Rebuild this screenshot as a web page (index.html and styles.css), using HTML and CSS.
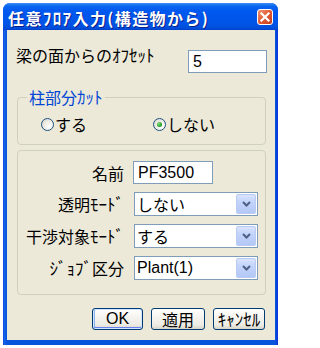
FILE: index.html
```html
<!DOCTYPE html>
<html lang="ja">
<head>
<meta charset="utf-8">
<title>任意ﾌﾛｱ入力(構造物から)</title>
<link rel="stylesheet" href="styles.css">
</head>
<body>
<div class="window">
  <div class="titlebar">
    <span class="title">任意<span class="hw">ﾌﾛｱ</span>入力(構造物から)</span>
    <span class="close">
      <svg width="16" height="16" viewBox="0 0 16 16">
        <defs>
          <linearGradient id="cg" x1="0" y1="0" x2="1" y2="1">
            <stop offset="0" stop-color="#F09A78"/>
            <stop offset="0.5" stop-color="#E25A35"/>
            <stop offset="1" stop-color="#C23A18"/>
          </linearGradient>
        </defs>
        <rect x="0.5" y="0.5" width="15" height="15" rx="2.5" fill="url(#cg)" stroke="#FFFFFF" stroke-width="1"/>
        <path d="M4.5 4.5 L11.5 11.5 M11.5 4.5 L4.5 11.5" stroke="#FFFFFF" stroke-width="2.2" stroke-linecap="square"/>
      </svg>
    </span>
  </div>
  <div class="client">
    <div class="offset-row">
      <span class="offset-label">梁の面からの<span class="hw">ｵﾌｾｯﾄ</span></span>
      <div class="textbox offset-box latin">5</div>
    </div>

    <fieldset class="group cut-group">
      <legend class="group-title">柱部分<span class="hw">ｶｯﾄ</span></legend>
      <div class="radios">
        <div class="radio"><span class="radio-mark"></span><span>する</span></div>
        <div class="radio"><span class="radio-mark checked"></span><span>しない</span></div>
      </div>
    </fieldset>

    <div class="group props">
      <span class="prop-label">名前</span>
      <div class="textbox name-box latin">PF3500</div>

      <span class="prop-label">透明<span class="hw">ﾓｰﾄﾞ</span></span>
      <div class="combo"><span class="combo-text">しない</span><span class="combo-btn"><svg width="9" height="6" viewBox="0 0 9 6"><path d="M1 1 L4.5 4.5 L8 1" fill="none" stroke="#4D6185" stroke-width="2"/></svg></span></div>

      <span class="prop-label">干渉対象<span class="hw">ﾓｰﾄﾞ</span></span>
      <div class="combo"><span class="combo-text">する</span><span class="combo-btn"><svg width="9" height="6" viewBox="0 0 9 6"><path d="M1 1 L4.5 4.5 L8 1" fill="none" stroke="#4D6185" stroke-width="2"/></svg></span></div>

      <span class="prop-label"><span class="hw">ｼﾞｮﾌﾞ</span>区分</span>
      <div class="combo"><span class="combo-text latin">Plant(1)</span><span class="combo-btn"><svg width="9" height="6" viewBox="0 0 9 6"><path d="M1 1 L4.5 4.5 L8 1" fill="none" stroke="#4D6185" stroke-width="2"/></svg></span></div>
    </div>

    <div class="buttons">
      <div class="btn btn-default btn-ok latin">OK</div>
      <div class="btn btn-apply">適用</div>
      <div class="btn btn-cancel"><span class="hw">ｷｬﾝｾﾙ</span></div>
    </div>
  </div>
</div>
</body>
</html>
```

FILE: styles.css
```css
* {
  box-sizing: border-box;
}

html, body {
  margin: 0;
  padding: 0;
  background: #FFFFFF;
}

body {
  font-family: "Noto Sans CJK JP", "Noto Sans", sans-serif;
  font-size: 16px;
  color: #000000;
}

.hw {
  font-size: 17px;
}

.latin {
  font-family: "Liberation Sans", "Noto Sans CJK JP", sans-serif;
  font-size: 16px;
}

.window {
  margin: 3px 0 0 3px;
  width: 275px;
  height: 342px;
  display: flex;
  flex-direction: column;
  background: linear-gradient(to right, #0831D9 0, #166AEE 1px, #0855DD 3px, #0855DD 272px, #0831D9 275px);
  border-radius: 7px 7px 0 0;
  overflow: hidden;
}

.titlebar {
  height: 27px;
  flex: none;
  display: flex;
  align-items: center;
  padding: 0 5px 0 5px;
  background: linear-gradient(to bottom, #3C8EF3 0, #0A66F0 3px, #0058EE 8px, #0054E8 20px, #0150DC 25px, #003DC8 27px);
}

.title {
  flex: 1;
  color: #FFFFFF;
  font-weight: bold;
  font-size: 16px;
  line-height: 20px;
  letter-spacing: 1.4px;
  margin-top: 3px;
  white-space: nowrap;
  text-shadow: 1px 1px 0 #0A1E8A;
}

.close {
  width: 16px;
  height: 16px;
  display: flex;
}

.client {
  flex: 1;
  margin: 0 3px 5px 4px;
  background: #ECE9D8;
  padding: 15px 9px 0 10px;
  display: flex;
  flex-direction: column;
}

.offset-row {
  display: flex;
  align-items: flex-start;
  height: 28px;
}

.offset-label {
  line-height: 20px;
  margin-left: -1px;
  white-space: nowrap;
}

.textbox {
  height: 23px;
  border: 1px solid #7F9DB9;
  background: #FFFFFF;
  line-height: 21px;
  padding-left: 4px;
  white-space: nowrap;
}

.offset-box {
  margin-left: auto;
  margin-right: -1px;
  margin-top: 5px;
  width: 79px;
}

.group {
  border: 1px solid #D0D0BF;
  border-radius: 4px;
  margin: 0;
}

.cut-group {
  margin-top: 17px;
  padding: 0 0 10px 0;
  min-width: 0;
}

.group-title {
  color: #0046D5;
  line-height: 14px;
  font-size: 16px;
  padding: 0 2px;
  margin-left: 9px;
}

.radios {
  margin-top: 10px;
  height: 20px;
  display: flex;
  padding-left: 23px;
}

.radio {
  width: 114px;
  display: flex;
  align-items: center;
  gap: 1px;
  line-height: 20px;
}

.radio-mark {
  width: 13px;
  height: 13px;
  border-radius: 50%;
  border: 1px solid #1C5180;
  background: radial-gradient(circle at 70% 70%, #FFFFFF 0, #F4F3EE 35%, #DCDAD0 85%);
  display: flex;
  align-items: center;
  justify-content: center;
}

.radio-mark.checked::after {
  content: "";
  width: 5px;
  height: 5px;
  border-radius: 50%;
  background: radial-gradient(circle at 35% 35%, #8CE08C 0, #30A830 50%, #1A861A 100%);
}

.props {
  margin-top: 5px;
  padding: 10px 7px 14px 0;
  display: grid;
  grid-template-columns: 106px 1fr;
  column-gap: 10px;
  row-gap: 8px;
  align-items: center;
}

.prop-label {
  text-align: right;
  white-space: nowrap;
  line-height: 20px;
}

.name-box {
  width: 80px;
  margin-left: -1px;
}

.combo {
  height: 24px;
  border: 1px solid #7F9DB9;
  background: #FFFFFF;
  display: flex;
  align-items: center;
  padding: 1px 1px 1px 2px;
}

.combo-text {
  flex: 1;
  line-height: 20px;
  white-space: nowrap;
}

.combo-btn {
  width: 20px;
  height: 20px;
  border-radius: 2px;
  border: 1px solid #B9CBF3;
  background: linear-gradient(to bottom, #D8E3FC 0, #C2D3FB 40%, #B4C8F6 100%);
  display: flex;
  align-items: center;
  justify-content: center;
}

.buttons {
  margin-top: 13px;
  display: flex;
  justify-content: flex-end;
  gap: 8px;
  margin-right: 1px;
}

.btn {
  height: 22px;
  border: 1px solid #003C74;
  border-radius: 3px;
  background: linear-gradient(to bottom, #FFFFFF 0, #F5F4EF 40%, #ECEBE4 80%, #D8D4C8 100%);
  display: flex;
  align-items: center;
  justify-content: center;
  line-height: 18px;
  white-space: nowrap;
}

.btn-default {
  box-shadow: inset 0 0 0 1px #CEE7FF, inset 0 -1px 0 1px #6982EE, inset 1px 0 0 1px #8CB4F2;
}

.btn-ok {
  width: 51px;
}

.btn-apply {
  width: 54px;
}

.btn-cancel {
  width: 52px;
}
```
